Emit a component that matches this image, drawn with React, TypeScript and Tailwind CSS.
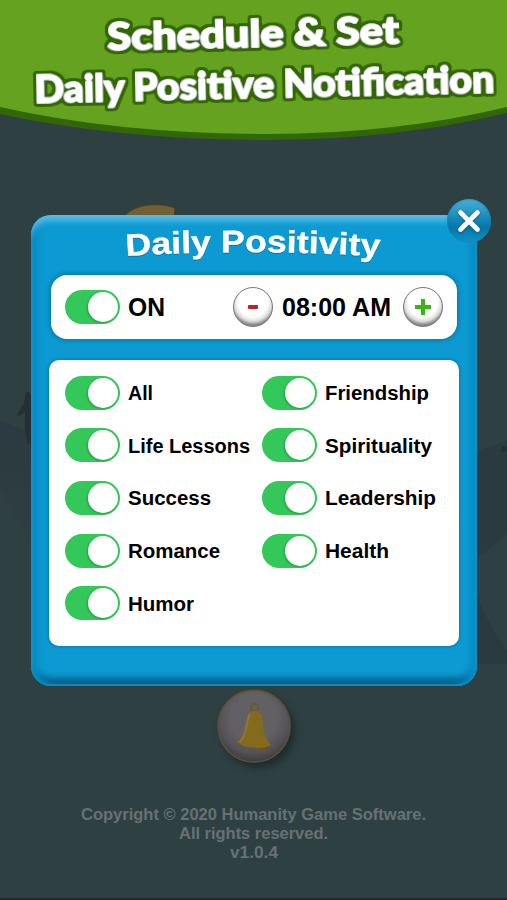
import React from "react";

const leftTopics = ["All", "Life Lessons", "Success", "Romance", "Humor"];
const rightTopics = ["Friendship", "Spirituality", "Leadership", "Health"];

const labelWidths: Record<string, number> = {
    All: 25,
    "Life Lessons": 122,
    Success: 83,
    Romance: 92,
    Humor: 66,
    Friendship: 104,
    Spirituality: 107,
    Leadership: 111,
    Health: 64,
};

type LineProps = {
    text: string;
    width: number;
    size: number;
    className?: string;
};

// One line of text fitted to a fixed width
const FittedLine = ({ text, width, size, className }: LineProps) => (
    <svg width={width} height={size * 1.3} className={`block shrink-0 overflow-visible ${className ?? ""}`}>
        <text x="0" y={size} fontSize={size} fontWeight="700" textLength={width} lengthAdjust="spacingAndGlyphs" fill="currentColor">
            {text}
        </text>
    </svg>
);

const Toggle = () => (
    <button
        role="switch"
        aria-checked="true"
        className="flex h-[34px] w-[55px] shrink-0 items-center justify-end rounded-full bg-[#34c759] pr-[2px]"
    >
        <span className="size-[30px] rounded-full bg-white shadow-[-1px_1px_2px_rgba(0,70,20,0.3)]" />
    </button>
);

const Topic = ({ name }: { name: string }) => (
    <div className="flex h-[34px] items-center gap-[8px]">
        <Toggle />
        <FittedLine text={name} width={labelWidths[name]} size={20} className="mt-[1px]" />
    </div>
);

const RoundButton = ({ children }: { children: React.ReactNode }) => (
    <button className="flex size-10 shrink-0 items-center justify-center rounded-full border-[1.5px] border-[#777] bg-[radial-gradient(circle_at_50%_38%,#fff_48%,#ddd_62%,#888_74%)]">
        {children}
    </button>
);

const Header = () => (
    <header className="h-[142px] shrink-0">
        <svg width="507" height="142" viewBox="0 0 507 142" className="block">
            <defs>
                <filter id="outline" x="-5%" y="-25%" width="110%" height="150%">
                    <feMorphology in="SourceAlpha" operator="dilate" radius="2" />
                    <feGaussianBlur stdDeviation="1.2" />
                    <feComponentTransfer result="edge">
                        <feFuncA type="linear" slope="5" intercept="-0.3" />
                    </feComponentTransfer>
                    <feFlood floodColor="#316705" />
                    <feComposite in2="edge" operator="in" />
                    <feMerge>
                        <feMergeNode />
                        <feMergeNode in="SourceGraphic" />
                    </feMerge>
                </filter>
            </defs>
            <path d="M0 0H507V113Q395 140 268 140Q120 140 0 114Z" fill="#316705" />
            <path d="M0 0H507V107Q395 134 268 134Q120 134 0 107Z" fill="#65a220" />
            <g
                fontFamily="Lato, 'Liberation Sans', sans-serif"
                fontWeight="900"
                fontSize="37"
                fill="#fff"
                stroke="#fff"
                strokeWidth="1.4"
                strokeLinejoin="round"
                filter="url(#outline)"
                transform="rotate(-1.3 253 70)"
            >
                <text x="108" y="47.5" textLength="292" lengthAdjust="spacingAndGlyphs">Schedule &amp; Set</text>
                <text x="34" y="98.5" textLength="460" lengthAdjust="spacingAndGlyphs">Daily Positive Notification</text>
            </g>
        </svg>
    </header>
);

const Bell = () => (
    <svg width="74" height="74" viewBox="0 0 74 74" className="block overflow-visible">
        <defs>
            <radialGradient id="disc" cx="50%" cy="38%" r="64%">
                <stop offset="0.5" stopColor="#626064" />
                <stop offset="0.78" stopColor="#535155" />
                <stop offset="1" stopColor="#39383b" />
            </radialGradient>
        </defs>
        <circle cx="37" cy="37" r="36" fill="url(#disc)" stroke="#5a5134" strokeWidth="1.5" />
        <circle cx="37.5" cy="18.5" r="3.6" fill="none" stroke="#6d5826" strokeWidth="1.8" />
        <path d="M41 59Q43 63 48 60L48 57Z" fill="#77501b" stroke="#77501b" strokeWidth="2" />
        <path d="M37.500 22C44 22 46 27 46 33C46 45 49 50 54 56Q49 59 42 59Q27 59 20 53C27 47 27 42 29 33C30 26 32 22 37.500 22Z" fill="#846a1c" />
        <path d="M33 25C28 33 32 43 23 53" fill="none" stroke="#8b7441" strokeWidth="2" />
    </svg>
);

const App = () => {
    return (
        <div className="relative isolate flex h-[900px] w-[507px] flex-col overflow-hidden bg-[#2f4043] font-['Liberation_Sans',Arial,sans-serif] text-black">
            {/* Dimmed scenery behind the dialog */}
            <svg width="507" height="900" className="absolute inset-0 -z-10">
                <defs>
                    <linearGradient id="hillLeft" x1="0" y1="0" x2="0" y2="1">
                        <stop offset="0" stopColor="#2b3a40" />
                        <stop offset="1" stopColor="#2f4043" />
                    </linearGradient>
                </defs>
                <path d="M0 420L48 440V580L0 490Z" fill="url(#hillLeft)" />
                <path d="M475 453L507 440V664H475Z" fill="#2b3a3f" />
                <path d="M475 560L507 535V650Q485 620 475 590Z" fill="#2f4044" />
                <path d="M26 392q4-1 5 4v48h-3l-3-15 0-17-7 5-1-2 7-12Z" fill="#262f33" />
                <circle cx="504" cy="449" r="3" fill="#253033" />
                <path d="M124 217C134 204 157 202 175 208L174 218Z" fill="#726034" stroke="#4c4029" />
                <path d="M0 899H507" stroke="#222a30" strokeWidth="2" />
            </svg>

            <Header />

            {/* Dialog */}
            <main className="relative mx-[31px] mt-[73px] flex h-[471px] w-[446px] shrink-0 flex-col rounded-[20px] bg-[#0d9ad2] px-[18px] shadow-[inset_0_9px_6px_-3px_#59bce5,inset_9px_0_7px_-2px_#078bc4,inset_-9px_0_7px_-2px_#078bc4,inset_0_-2px_1px_#168bb8,inset_0_-10px_6px_-2px_#075c83]">
                <svg width="410" height="60" viewBox="0 0 410 60" className="block shrink-0 overflow-visible">
                    <path id="titleArc" d="M77 41Q205 33 340 42" fill="none" />
                    <text
                        fontSize="31"
                        fontWeight="700"
                        fill="#fff"
                        stroke="#fff"
                        strokeWidth="0.4"
                        strokeLinejoin="round"
                        className="drop-shadow-[0_1px_0_#0878aa]"
                    >
                        <textPath href="#titleArc" textLength="254" lengthAdjust="spacingAndGlyphs">Daily Positivity</textPath>
                    </text>
                </svg>

                <section className="mx-[2px] flex h-[64px] shrink-0 items-center rounded-[16px] bg-white px-[14px] shadow-[0_0_4px_2px_#087dad]">
                    <Toggle />
                    <FittedLine text="ON" width={37} size={25} className="ml-[8px] mt-[1px]" />
                    <div className="ml-auto flex items-center">
                        <RoundButton>
                            <span className="h-[4px] w-[10px] rounded-[1px] bg-[#bd2328]" />
                        </RoundButton>
                        <FittedLine text="08:00 AM" width={109} size={25} className="ml-[9px] mr-[12px] mt-[1px]" />
                        <RoundButton>
                            <svg width="18" height="18" viewBox="0 0 18 18">
                                <path d="M9 1V17M1 9H17" stroke="#3bb418" strokeWidth="4" />
                            </svg>
                        </RoundButton>
                    </div>
                </section>

                <section className="mt-[21px] flex h-[286px] shrink-0 rounded-[10px] bg-white pl-[16px] pt-[15.5px] shadow-[0_0_3px_1px_#087dad]">
                    <div className="flex w-[197px] flex-col gap-[18.700px]">
                        {leftTopics.map((name) => (
                            <Topic key={name} name={name} />
                        ))}
                    </div>
                    <div className="flex flex-col gap-[18.700px]">
                        {rightTopics.map((name) => (
                            <Topic key={name} name={name} />
                        ))}
                    </div>
                </section>

                <button
                    aria-label="Close"
                    className="absolute -right-[14px] -top-[16px] flex size-[44px] items-center justify-center rounded-full bg-[linear-gradient(#4ab0da,#1688b8_45%,#0875a5_65%,#0c96c8)] shadow-[inset_0_0_3px_#0786b5]"
                >
                    <svg width="24" height="24" viewBox="0 0 24 24" className="drop-shadow-[0_1px_1px_#075b80]">
                        <path d="M3.500 3.500L20.500 20.500M20.500 3.500L3.500 20.500" stroke="#fff" strokeWidth="4.700" strokeLinecap="round" />
                    </svg>
                </button>
            </main>

            <div className="ml-[217px] mt-[3px] size-[74px] shrink-0 rounded-full shadow-[4px_5px_7px_#202b2e]">
                <Bell />
            </div>

            <footer className="mt-[41px] flex flex-col items-center text-[#667174]">
                <FittedLine text="Copyright © 2020 Humanity Game Software." width={345} size={16} className="-mb-[2px]" />
                <FittedLine text="All rights reserved." width={149} size={16} className="-mb-[2px]" />
                <FittedLine text="v1.0.4" width={48} size={16} />
            </footer>
        </div>
    );
};

export default App;
